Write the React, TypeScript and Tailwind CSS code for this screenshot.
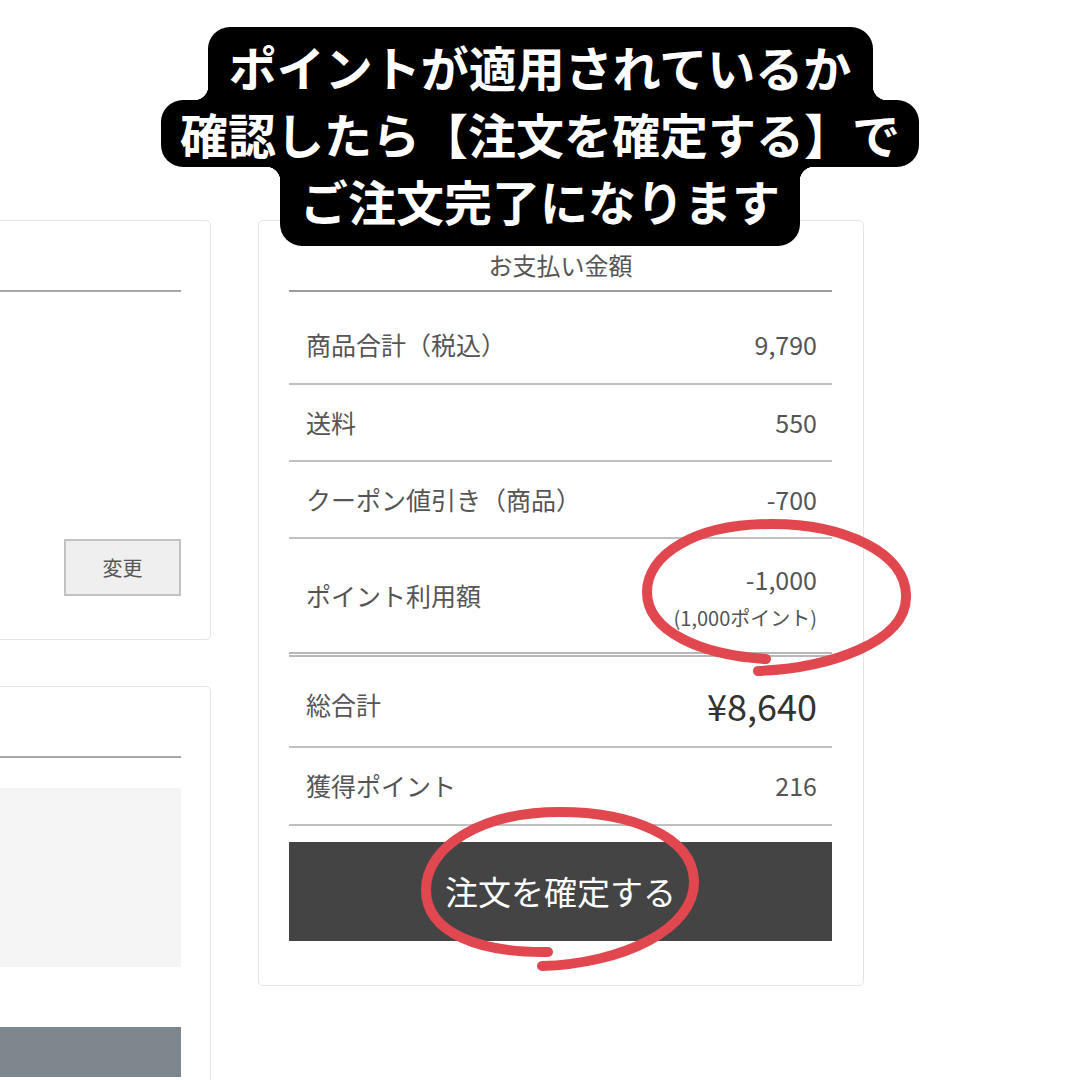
const jp = { fontFamily: '"Noto Sans CJK JP", "Noto Sans", sans-serif' };

type Row = { label: string; value: string };

const rows: Row[] = [
  { label: '商品合計（税込）', value: '9,790' },
  { label: '送料', value: '550' },
  { label: 'クーポン値引き（商品）', value: '-700' },
];

function LeftPanels() {
  return (
    <div className="ml-[-189px] flex w-[400px] shrink-0 flex-col gap-[46px]">
      <div className="h-[420px] rounded-[5px] border border-[#e4e4e4] bg-white px-[29px]">
        <div className="h-[71px] border-b-2 border-[#a8a8a8]" />
        <div className="flex h-[304px] items-end justify-end">
          <button className="flex h-[57px] w-[117px] items-center justify-center border-2 border-[#c2c2c2] bg-[#efefef] text-[20px] text-[#555]">
            変更
          </button>
        </div>
      </div>
      <div className="h-[420px] rounded-[5px] border border-[#e4e4e4] bg-white px-[29px]">
        <div className="h-[71px] border-b-2 border-[#a8a8a8]" />
        <div className="mt-[30px] h-[179px] bg-[#f5f5f5]" />
        <div className="mt-[60px] h-[50px] bg-[#7e868d]" />
      </div>
    </div>
  );
}

function PaymentPanel() {
  return (
    <div className="w-[606px] shrink-0 rounded-[5px] border border-[#e4e4e4] bg-white pl-[30px] pr-[31px] pb-[44px] text-[#555]">
      <div className="flex h-[71px] items-end justify-center border-b-2 border-[#9c9c9c] pb-[9px] text-[24px] leading-[32px] text-[#555]">
        お支払い金額
      </div>
      {rows.map((r, i) => (
        <div
          key={r.label}
          className={`flex items-center justify-between border-b-2 border-[#c0c0c0] pl-[17px] pr-[15px] text-[25px] ${
            i === 0 ? 'h-[93px] pt-[14px]' : 'h-[77px]'
          }`}
        >
          <span>{r.label}</span>
          <span>{r.value}</span>
        </div>
      ))}
      <div className="flex h-[118px] items-center justify-between border-b-[5px] border-double border-[#b8b8b8] pl-[17px] pr-[15px] text-[25px]">
        <span>ポイント利用額</span>
        <div className="flex flex-col items-end">
          <span className="leading-[36px]">-1,000</span>
          <span className="mt-[8px] text-[20px] leading-[26px]">(1,000ポイント)</span>
        </div>
      </div>
      <div className="flex h-[91px] items-center justify-between border-b-2 border-[#c0c0c0] pl-[17px] pr-[15px] pt-[6px]">
        <span className="text-[25px]">総合計</span>
        <span className="text-[36px] leading-[44px] text-[#333]">¥8,640</span>
      </div>
      <div className="flex h-[78px] items-center justify-between border-b-2 border-[#c0c0c0] pl-[17px] pr-[15px] text-[25px]">
        <span>獲得ポイント</span>
        <span>216</span>
      </div>
      <button className="mt-[16px] flex h-[99px] w-full items-center justify-center bg-[#444] text-[33px] text-white">
        注文を確定する
      </button>
    </div>
  );
}

function Caption() {
  return (
    <div className="absolute left-0 right-0 top-[27px] flex flex-col items-center text-[48px] font-bold leading-[67px] text-white">
      <div className="relative w-[665px] rounded-t-[22px] bg-black pt-[6px] text-center">
        ポイントが適用されているか
        <span className="absolute bottom-0 left-[-14px] h-[14px] w-[14px] bg-[radial-gradient(circle_at_0_0,transparent_14px,black_14.5px)]" />
        <span className="absolute bottom-0 right-[-14px] h-[14px] w-[14px] bg-[radial-gradient(circle_at_100%_0,transparent_14px,black_14.5px)]" />
      </div>
      <div className="w-[758px] rounded-[22px] bg-black text-center">確認したら【注文を確定する】で</div>
      <div className="relative w-[520px] rounded-b-[22px] bg-black pb-[12px] text-center">
        ご注文完了になります
        <span className="absolute left-[-14px] top-0 h-[14px] w-[14px] bg-[radial-gradient(circle_at_0_100%,transparent_14px,black_14.5px)]" />
        <span className="absolute right-[-14px] top-0 h-[14px] w-[14px] bg-[radial-gradient(circle_at_100%_100%,transparent_14px,black_14.5px)]" />
      </div>
    </div>
  );
}

function Marks() {
  return (
    <svg className="pointer-events-none absolute left-0 top-0" width="1080" height="1080" viewBox="0 0 1080 1080" fill="none">
      <g stroke="#e0474f" strokeWidth="10" strokeLinecap="round">
        <path d="M758 671 C830 668 905 642 906 598 C908 552 842 524 772 524 C692 524 647 556 647 592 C647 632 702 655 766 659" />
        <path d="M542 966 C620 964 696 930 694 880 C692 836 630 812 560 812 C482 812 426 846 426 890 C426 934 482 953 548 952" />
      </g>
    </svg>
  );
}

export default function App() {
  return (
    <div className="relative h-[1080px] w-[1080px] overflow-hidden bg-white" style={jp}>
      <div className="flex items-start gap-[47px] pt-[220px]">
        <LeftPanels />
        <PaymentPanel />
      </div>
      <Marks />
      <Caption />
    </div>
  );
}
